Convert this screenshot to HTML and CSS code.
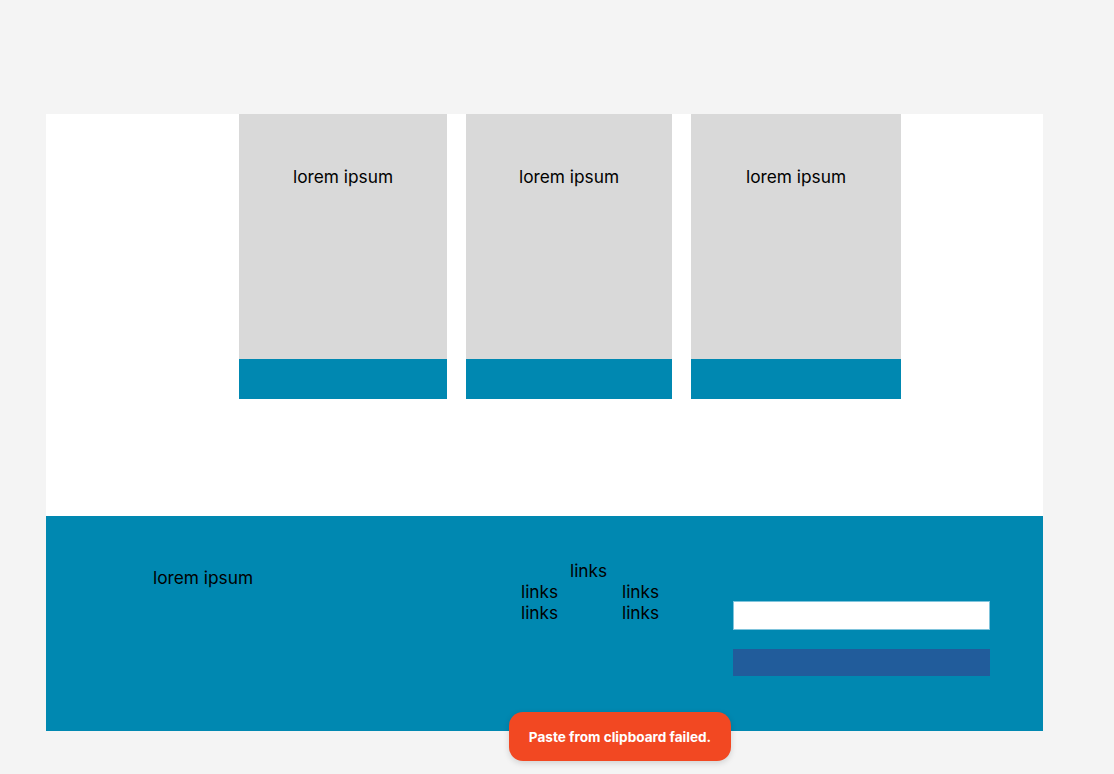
FILE: index.html
```html
<!DOCTYPE html>
<html>
<head>
<meta charset="utf-8">
<link rel="stylesheet" href="styles.css">
</head>
<body>
<div class="page">
  <section class="hero">
    <div class="cards">
      <div class="card c1"><div class="card-body">lorem ipsum</div><div class="card-bar"></div></div>
      <div class="card c2"><div class="card-body">lorem ipsum</div><div class="card-bar"></div></div>
      <div class="card c3"><div class="card-body">lorem ipsum</div><div class="card-bar"></div></div>
    </div>
  </section>
  <footer class="footer">
    <div class="brand">lorem ipsum</div>
    <div class="links">
      <div class="links-top">links</div>
      <div class="links-grid">
        <span>links</span><span>links</span>
        <span>links</span><span>links</span>
      </div>
    </div>
    <div class="form">
      <div class="input"></div>
      <div class="button"></div>
    </div>
  </footer>
</div>
<div class="toast">Paste from clipboard failed.</div>
</body>
</html>
```
FILE: styles.css
```css
html, body {
  margin: 0;
  padding: 0;
  background: #f4f4f4;
  font-family: Inter, "Noto Sans", sans-serif;
  color: #000;
}
.page {
  margin: 114px 0 0 46px;
  width: 997px;
}
.hero {
  background: #ffffff;
  height: 402px;
}
.cards {
  display: flex;
  gap: 19px;
  padding-left: 193px;
}
.card {
  display: flex;
  flex-direction: column;
}
.c1 { width: 208px; }
.c2 { width: 206px; }
.c3 { width: 210px; }
.card-body {
  background: #d9d9d9;
  height: 245px;
  box-sizing: border-box;
  padding-top: 53px;
  text-align: center;
  font-size: 17.3px;
  line-height: 20px;
}
.card-bar {
  background: #0088b1;
  height: 40px;
}
.footer {
  background: #0088b1;
  height: 215px;
  display: flex;
  align-items: flex-start;
  box-sizing: border-box;
}
.brand {
  font-size: 17.3px;
  line-height: 20px;
  margin: 52px 0 0 107px;
  width: 368px;
}
.links {
  margin-top: 44px;
  width: 212px;
  font-size: 17.3px;
  line-height: 21px;
}
.links-top {
  padding-left: 49px;
}
.links-grid {
  display: grid;
  grid-template-columns: 101px 60px;
}
.form {
  margin-top: 85px;
  width: 257px;
  display: flex;
  flex-direction: column;
  gap: 19px;
}
.input {
  background: #fff;
  height: 29px;
  box-sizing: border-box;
  border: 1px solid #7fc4dc;
}
.button {
  background: #215c9b;
  height: 27px;
}
.toast {
  position: absolute;
  left: 509px;
  top: 712px;
  width: 222px;
  height: 49px;
  border-radius: 14px;
  background: #f24822;
  color: #fff;
  font-weight: 700;
  font-size: 13.6px;
  display: flex;
  align-items: center;
  justify-content: center;
  box-shadow: 0 2px 6px rgba(0,0,0,0.15);
}
```
